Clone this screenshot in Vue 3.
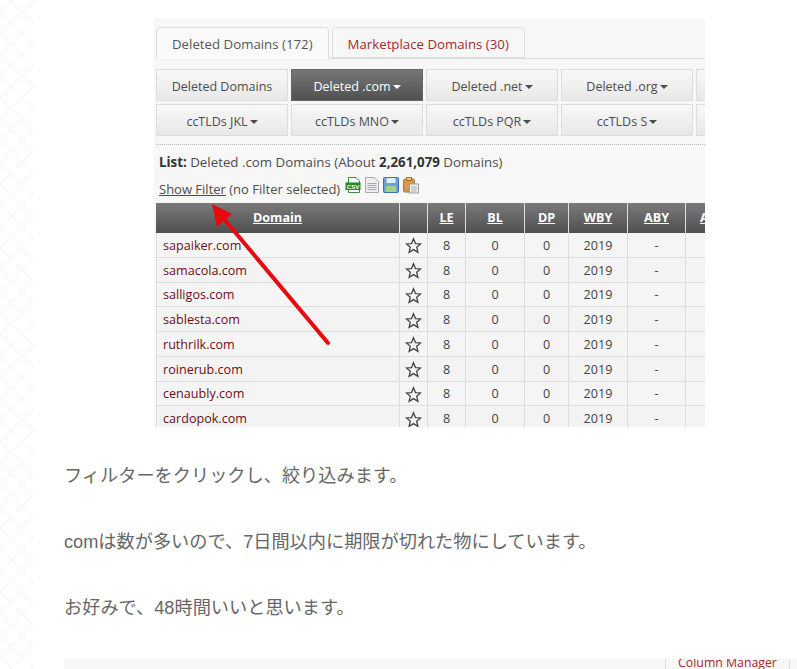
<script setup>
const row1 = [
  { t: 'Deleted Domains', c: false },
  { t: 'Deleted .com', c: true, on: true },
  { t: 'Deleted .net', c: true },
  { t: 'Deleted .org', c: true },
  { t: '', c: false }
]
const row2 = [
  { t: 'ccTLDs JKL', c: true },
  { t: 'ccTLDs MNO', c: true },
  { t: 'ccTLDs PQR', c: true },
  { t: 'ccTLDs S', c: true },
  { t: '', c: false }
]
const heads = ['LE', 'BL', 'DP', 'WBY', 'ABY', 'A']
const domains = ['sapaiker.com', 'samacola.com', 'salligos.com', 'sablesta.com', 'ruthrilk.com', 'roinerub.com', 'cenaubly.com', 'cardopok.com']
</script>

<template>
  <div class="page">
    <svg class="lattice" width="33" height="669" aria-hidden="true">
      <defs>
        <pattern id="lat" width="22" height="43" patternUnits="userSpaceOnUse" x="0" y="1">
          <path d="M0 10.75L11 0L22 10.75L11 21.5L0 10.75M0 32.25L11 21.5L22 32.25L11 43L0 32.25" fill="none" stroke="#f3f3f3" stroke-width="1" />
        </pattern>
      </defs>
      <rect width="33" height="669" fill="url(#lat)" />
    </svg>

    <main class="content">
      <div class="shot">
        <div class="tabs">
          <div class="tab active">Deleted Domains (172)</div>
          <div class="tab red">Marketplace Domains (30)</div>
        </div>
        <div class="btnrow">
          <div v-for="(b, i) in row1" :key="i" class="btn" :class="{ on: b.on }">{{ b.t }}<i v-if="b.c" class="caret"></i></div>
        </div>
        <div class="btnrow second">
          <div v-for="(b, i) in row2" :key="i" class="btn">{{ b.t }}<i v-if="b.c" class="caret"></i></div>
        </div>
        <div class="dots"></div>
        <p class="list"><b>List:</b> Deleted .com Domains (About <b>2,261,079</b> Domains)</p>
        <div class="filter">
          <u>Show Filter</u> (no Filter selected)
          <span class="icons">
            <svg width="16" height="16" viewBox="0 0 16 16"><path d="M3.500 .5H11L14.500 4V7H3.500Z" fill="#fff" stroke="#3f8a45"/><rect x=".5" y="5.500" width="15" height="7.500" fill="#1f8a32"/><text x="8" y="11.800" text-anchor="middle" class="csv">CSV</text><path d="M3.500 13V15.500H14.500V13" fill="#fff" stroke="#3f8a45"/></svg>
            <svg width="14" height="16" viewBox="0 0 14 16"><path d="M.5 .5H9L13.500 4.500V15.500H.5Z" fill="#eee" stroke="#a9a9a9"/><path d="M2.500 6.500H11.500M2.500 8.500H11.500M2.500 10.500H11.500M2.500 12.500H11.500" stroke="#a9a9a9"/></svg>
            <svg width="16" height="16" viewBox="0 0 16 16"><rect x=".5" y=".5" width="15" height="15" rx="1" fill="#6c9fdc" stroke="#3a6fb5"/><rect x="3.500" y="1" width="9" height="5" fill="#e4ecf6"/><rect x="3" y="9" width="10" height="6" fill="#a8d08d"/></svg>
            <svg width="16" height="17" viewBox="0 0 16 17"><rect x=".5" y="2" width="11" height="13" rx="1.500" fill="#d49a50" stroke="#a9742f"/><rect x="3.500" y=".5" width="5" height="3" fill="#e8c48c" stroke="#a9742f"/><rect x="6.500" y="7" width="9" height="9" fill="#f4f4f4" stroke="#999"/><path d="M8 10H14M8 12H14M8 14H14" stroke="#aaa"/></svg>
          </span>
        </div>
        <table class="grid">
          <colgroup>
            <col class="c-d" /><col class="c-s" /><col class="c-le" /><col class="c-bl" /><col class="c-dp" /><col class="c-w" /><col class="c-a" /><col class="c-x" />
          </colgroup>
          <thead>
            <tr>
              <th><u>Domain</u></th>
              <th></th>
              <th v-for="h in heads" :key="h"><u>{{ h }}</u></th>
            </tr>
          </thead>
          <tbody>
            <tr v-for="d in domains" :key="d">
              <td class="name">{{ d }}</td>
              <td class="star">
                <svg width="17" height="17" viewBox="0 0 24 24"><path d="M12 2.500L14.800 9.300L22 9.800L16.500 14.500L18.200 21.600L12 17.800L5.800 21.600L7.500 14.500L2 9.800L9.200 9.300Z" fill="none" stroke="#444" stroke-width="1.800" stroke-linejoin="miter"/></svg>
              </td>
              <td>8</td><td>0</td><td>0</td><td>2019</td><td>-</td><td></td>
            </tr>
          </tbody>
        </table>
        <svg class="arrow" width="130" height="150" viewBox="0 0 130 150" aria-hidden="true">
          <path d="M120 139L16 15" stroke="#e8090f" stroke-width="4" stroke-linecap="round" fill="none" />
          <path d="M4 0L24 10L9 23Z" fill="#e8090f" />
        </svg>
      </div>

      <p class="jp">フィルターをクリックし、絞り込みます。</p>
      <p class="jp">comは数が多いので、7日間以内に期限が切れた物にしています。</p>
      <p class="jp">お好みで、48時間いいと思います。</p>

      <div class="strip"><span class="cm">Column Manager</span></div>
    </main>
  </div>
</template>

<style scoped>
.page {
  position: relative;
  width: 797px;
  height: 669px;
  overflow: hidden;
  background: #fff;
}
.lattice {
  position: absolute;
  left: 0;
  top: 0;
}
.content {
  padding: 19px 0 0 64px;
}
.shot {
  position: relative;
  width: 551px;
  height: 408px;
  margin-left: 90px;
  overflow: hidden;
  box-sizing: border-box;
  padding: 8px 0 0 2px;
  background: #f7f7f7;
  font: 13px/18px "Open Sans", sans-serif;
  color: #4d4d4d;
}
.tabs {
  display: flex;
  gap: 3px;
  height: 32px;
  box-sizing: border-box;
  border-bottom: 1px solid #ddd;
}
.tab {
  box-sizing: border-box;
  height: 32px;
  padding: 7px 15px 0;
  border: 1px solid #ddd;
  border-radius: 4px 4px 0 0;
  font-size: 13.250px;
  white-space: nowrap;
  color: #555;
}
.tab.active {
  background: #fafafa;
  border-bottom-color: #fafafa;
}
.tab.red {
  color: #a52a2a;
  height: 31px;
}
.btnrow {
  display: flex;
  gap: 3px;
  margin-top: 10px;
}
.btnrow.second {
  margin-top: 3px;
}
.btn {
  flex: 0 0 132px;
  box-sizing: border-box;
  height: 32px;
  padding-top: 2px;
  line-height: 30px;
  font-size: 12.500px;
  text-align: center;
  border: 1px solid #ddd;
  background: linear-gradient(#f8f8f8, #e8e8e8);
  white-space: nowrap;
  color: #4d4d4d;
}
.btn.on {
  background: linear-gradient(#767676, #515151);
  border-color: #666;
  color: #fff;
}
.caret {
  display: inline-block;
  margin-left: 2px;
  vertical-align: 2px;
  border: 4px solid transparent;
  border-top-color: currentColor;
  border-bottom: 0;
}
.dots {
  margin-top: 8px;
  border-top: 1px dotted #bbb;
}
.list {
  margin: 8px 0 0 3px;
  font-size: 13.300px;
  white-space: nowrap;
}
.list b {
  font-weight: 700;
  color: #333;
}
.filter {
  margin: 6px 0 0 3px;
  height: 21px;
  white-space: nowrap;
}
.icons {
  display: inline-flex;
  gap: 4px;
  margin-left: 1px;
  vertical-align: 1px;
}
.csv {
  font: 700 6px "Liberation Sans", sans-serif;
  fill: #fff;
}
.grid {
  width: 617px;
  margin-top: 5px;
  border-collapse: separate;
  border-spacing: 0;
  table-layout: fixed;
  font-size: 12.600px;
}
.c-d { width: 244px; }
.c-s { width: 28px; }
.c-le { width: 38px; }
.c-bl { width: 59px; }
.c-dp { width: 44px; }
.c-w { width: 59px; }
.c-a { width: 58px; }
.c-x { width: 87px; }
th {
  height: 29px;
  padding: 0 0 1px;
  border-right: 1px solid #ddd;
  background: linear-gradient(#7a7a7a, #4f4f4f);
  color: #fff;
  font-weight: 700;
}
th:last-child {
  text-align: left;
  padding-left: 14px;
}
td {
  height: 24.750px;
  box-sizing: border-box;
  padding: 2px 0 0;
  border-right: 1px solid #ddd;
  border-bottom: 1px solid #ddd;
  background: #f5f5f5;
  text-align: center;
  color: #444;
}
tr:nth-child(even) td {
  background: #f3f3f3;
}
td.name {
  padding-left: 6px;
  text-align: left;
  border-left: 1px solid #ddd;
  color: #6b0f14;
}
td.star svg {
  display: block;
  margin: 0 auto;
}
.arrow {
  position: absolute;
  left: 54px;
  top: 185px;
}
.jp {
  margin: 0;
  font: 18.200px/30px "Liberation Sans", "Noto Sans CJK JP", sans-serif;
  color: #666;
  white-space: nowrap;
}
.shot + .jp {
  margin-top: 34px;
}
.jp + .jp {
  margin-top: 36px;
}
.strip {
  position: relative;
  height: 10px;
  margin-top: 36px;
  overflow: hidden;
  background: #f7f7f7;
}
.cm {
  position: absolute;
  left: 601px;
  top: -6px;
  width: 125px;
  box-sizing: border-box;
  height: 30px;
  border: 1px solid #ddd;
  text-align: center;
  font: 12.300px/18px "Open Sans", sans-serif;
  color: #a52a2a;
}
</style>
